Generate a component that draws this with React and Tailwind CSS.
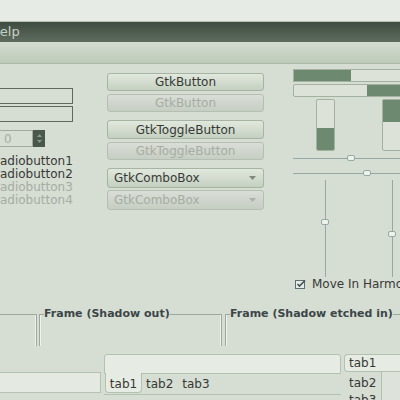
import React from 'react';

const font = "font-['DejaVu_Sans',sans-serif]";

const Button = ({ label, disabled, h = 'h-[18px]', combo }) => (
    <div
        className={`${h} w-full rounded-[3px] border flex items-center ${combo ? 'justify-between pl-[6px] pr-[7px]' : 'justify-center'} text-[12px] ${
            disabled
                ? 'border-[#b6beb3] bg-gradient-to-b from-[#d9ded6] to-[#c6cdc3] text-[#a6ada3]'
                : 'border-[#a7b3a3] bg-gradient-to-b from-[#e1e8dd] to-[#c5d0c1] text-[#363936]'
        }`}
    >
        <span>{label}</span>
        {combo && (
            <svg width="7" height="4" viewBox="0 0 7 4">
                <path d="M0 0 L7 0 L3.5 4 Z" fill={disabled ? '#aab1a7' : '#7f897c'} />
            </svg>
        )}
    </div>
);

const Radio = ({ label, disabled }) => (
    <div className={`h-[13px] leading-[13px] text-[12px] pl-[15px] ${disabled ? 'text-[#a5aca3]' : 'text-[#363936]'}`}>
        {label}
    </div>
);

const Knob = () => <div className="w-[8px] h-[6px] rounded-[2px] bg-[#eef2ec] border border-[#97a9a5]" />;

const HSlider = ({ at }) => (
    <div className="relative h-[8px] flex items-center">
        <div className="h-[1px] w-full bg-[#95a8a5]" />
        <div className="absolute top-[1px]" style={{ left: at }}>
            <Knob />
        </div>
    </div>
);

const VSlider = ({ at, left }) => (
    <div className="relative w-[8px] h-full flex justify-center" style={{ marginLeft: left }}>
        <div className="w-[1px] h-full bg-[#95a8a5]" />
        <div className="absolute" style={{ top: at }}>
            <Knob />
        </div>
    </div>
);

const FrameTitle = ({ label }) => (
    <div className="flex items-center h-[12px] -mt-[6px]">
        <div className="w-[4px] h-[1px] bg-[#9fa79d]" />
        <span className="text-[11px] font-bold text-[#3c4648] leading-[12px] whitespace-nowrap">{label}</span>
        <div className="flex-1 h-[1px] bg-[#9fa79d]" />
    </div>
);

export default function App() {
    return (
        <div className={`w-[400px] h-[400px] overflow-hidden bg-[#d6ddd3] ${font}`}>
            {/* title area */}
            <div className="h-[22px] bg-[#e6ebe5] border-b border-[#b3bfb0]" />
            <div className="h-[20px] bg-gradient-to-b from-[#3f4c41] to-[#5e6c5f] flex items-center overflow-hidden">
                <span className="-ml-[10px] text-[13px] text-[#c8d0c6]">Help</span>
            </div>
            <div className="h-[22px] bg-gradient-to-b from-[#d4dcd0] to-[#bdcab9] border-b border-[#adb9a9]" />

            {/* main widgets */}
            <div className="h-[250px] flex items-start">
                <div className="-ml-[20px] w-[93px] pt-[24px] shrink-0">
                    <div className="h-[16px] border border-[#60685e]" />
                    <div className="h-[16px] mt-[2px] border border-[#60685e]" />
                    <div className="mt-[8px] h-[17px] flex">
                        <div className="w-[53px] border border-[#a2ab9f] flex items-center text-[12px] text-[#a6ada3] pl-[23px]">0</div>
                        <div className="w-[12px] bg-[#4a584c] flex flex-col items-center justify-center gap-[3px]">
                            <svg width="5" height="3" viewBox="0 0 5 3"><path d="M0 3 L5 3 L2.5 0 Z" fill="#8e9a8f" /></svg>
                            <svg width="5" height="3" viewBox="0 0 5 3"><path d="M0 0 L5 0 L2.5 3 Z" fill="#8e9a8f" /></svg>
                        </div>
                    </div>
                    <div className="mt-[8px]">
                        <Radio label="radiobutton1" />
                        <Radio label="radiobutton2" />
                        <Radio label="radiobutton3" disabled />
                        <Radio label="radiobutton4" disabled />
                    </div>
                </div>

                <div className="ml-[34px] w-[157px] pt-[9px] shrink-0 flex flex-col">
                    <Button label="GtkButton" />
                    <div className="mt-[3px]"><Button label="GtkButton" disabled /></div>
                    <div className="mt-[8px]"><Button label="GtkToggleButton" h="h-[19px]" /></div>
                    <div className="mt-[3px]"><Button label="GtkToggleButton" disabled /></div>
                    <div className="mt-[8px]"><Button label="GtkComboBox" h="h-[20px]" combo /></div>
                    <div className="mt-[2px]"><Button label="GtkComboBox" h="h-[20px]" combo disabled /></div>
                </div>

                <div className="ml-[29px] w-[130px] pt-[5px] shrink-0">
                    <div className="h-[13px] flex border border-[#a4b0a0] bg-[#dce2d8]">
                        <div className="w-[57px] bg-[#6d8a70]" />
                    </div>
                    <div className="mt-[2px] h-[13px] flex justify-end border border-[#a4b0a0] rounded-[2px] bg-[#dce2d8]">
                        <div className="w-[55px] bg-[#6d8a70]" />
                    </div>
                    <div className="mt-[2px] flex">
                        <div className="ml-[23px] w-[19px] h-[52px] border border-[#a4b0a0] rounded-[2px] bg-[#dce2d8] flex flex-col justify-end">
                            <div className="h-[22px] bg-[#6d8a70] rounded-b-[1px]" />
                        </div>
                        <div className="ml-[47px] w-[22px] h-[52px] border border-[#a4b0a0] rounded-[2px] bg-[#dce2d8]">
                            <div className="h-[22px] bg-[#6d8a70]" />
                        </div>
                    </div>
                    <div className="mt-[3px]"><HSlider at="54px" /></div>
                    <div className="mt-[7px]"><HSlider at="70px" /></div>
                    <div className="mt-[3px] h-[97px] flex">
                        <VSlider left="28px" at="39px" />
                        <VSlider left="59px" at="51px" />
                    </div>
                    <div className="h-[14px] flex items-center ml-[2px]">
                        <svg width="11" height="10" viewBox="0 0 11 10">
                            <rect x="0.5" y="1.5" width="9" height="8" fill="#e8ece6" stroke="#5f6e72" />
                            <path d="M2.5 5 L4.5 7 L10 1.5" fill="none" stroke="#3f5358" strokeWidth="1.6" />
                        </svg>
                        <span className="ml-[6px] text-[12px] text-[#363936] whitespace-nowrap">Move In Harmony</span>
                    </div>
                </div>
            </div>

            {/* frames */}
            <div className="h-[32px] flex">
                <div className="w-[37px] shrink-0 border-t border-r border-[#9fa79d] shadow-[inset_-1px_0_0_#eef1ec]" />
                <div className="ml-[2px] w-[183px] shrink-0 flex flex-col border-l border-r border-[#9fa79d] shadow-[inset_1px_0_0_#eef1ec,inset_-1px_0_0_#eef1ec]">
                    <FrameTitle label="Frame (Shadow out)" />
                </div>
                <div className="ml-[3px] w-[200px] shrink-0 flex flex-col border-l border-[#9fa79d] shadow-[inset_1px_0_0_#eef1ec]">
                    <FrameTitle label="Frame (Shadow etched in)" />
                </div>
            </div>

            {/* notebooks */}
            <div className="pt-[8px] flex items-start">
                <div className="-ml-[5px] w-[106px] shrink-0 mt-[18px] h-[21px] bg-[#e4e9e1] border border-[#b7c1b3]" />
                <div className="ml-[3px] w-[237px] shrink-0">
                    <div className="h-[20px] bg-[#e6ebe3] border border-[#b5c0b1] rounded-t-[3px]" />
                    <div className="flex items-start text-[12px] text-[#363936] border-b border-[#b5c0b1] h-[21px]">
                        <div className="ml-[1px] w-[37px] h-[20px] -mt-[1px] bg-[#e6ebe3] border border-t-0 border-[#b5c0b1] rounded-b-[4px] flex items-center justify-center pt-[2px]">
                            tab1
                        </div>
                        <div className="ml-[4px] h-[19px] flex items-center">tab2</div>
                        <div className="ml-[9px] h-[19px] flex items-center">tab3</div>
                    </div>
                </div>
                <div className="ml-[3px] w-[70px] shrink-0 text-[12px] text-[#363936]">
                    <div className="h-[18px] bg-[#e6ebe3] border border-r-0 border-[#b5c0b1] rounded-l-[4px] flex items-center pl-[4px]">
                        tab1
                    </div>
                    <div className="flex">
                        <div className="w-[37px] shrink-0">
                            <div className="h-[21px] flex items-center pl-[5px]">tab2</div>
                            <div className="h-[14px] flex items-center pl-[5px]">tab3</div>
                        </div>
                        <div className="flex-1 h-[40px] bg-[#dde2da] border-l border-[#b5c0b1]" />
                    </div>
                </div>
            </div>
        </div>
    );
}
